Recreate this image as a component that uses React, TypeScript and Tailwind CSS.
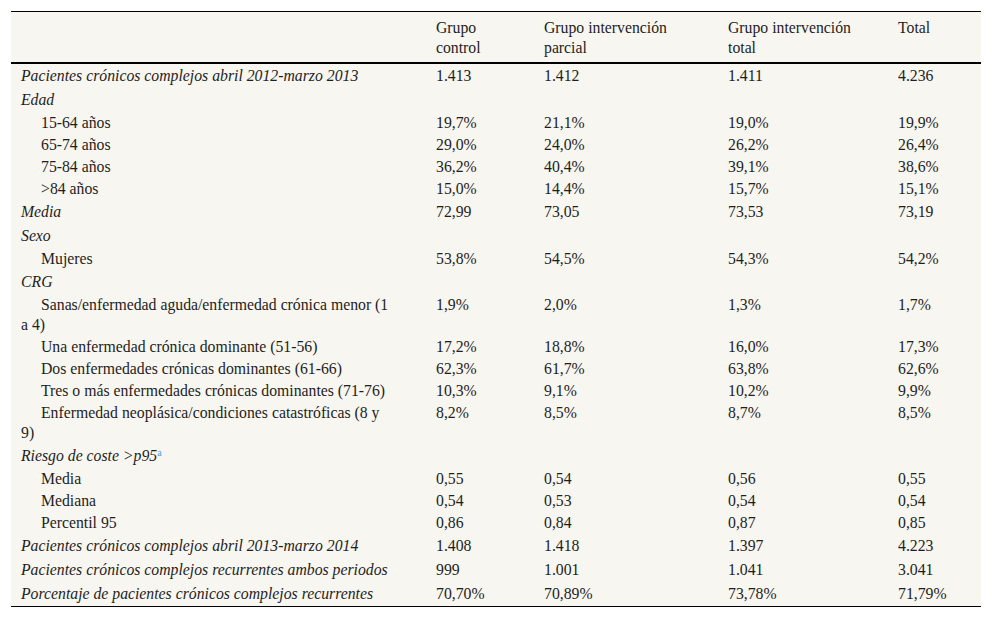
import React from "react";

type Row = { label: React.ReactNode; vals?: string[]; kind: "head" | "sub" };

const rows: Row[] = [
  { label: "Pacientes crónicos complejos abril 2012-marzo 2013", vals: ["1.413", "1.412", "1.411", "4.236"], kind: "head" },
  { label: "Edad", kind: "head" },
  { label: "15-64 años", vals: ["19,7%", "21,1%", "19,0%", "19,9%"], kind: "sub" },
  { label: "65-74 años", vals: ["29,0%", "24,0%", "26,2%", "26,4%"], kind: "sub" },
  { label: "75-84 años", vals: ["36,2%", "40,4%", "39,1%", "38,6%"], kind: "sub" },
  { label: ">84 años", vals: ["15,0%", "14,4%", "15,7%", "15,1%"], kind: "sub" },
  { label: "Media", vals: ["72,99", "73,05", "73,53", "73,19"], kind: "head" },
  { label: "Sexo", kind: "head" },
  { label: "Mujeres", vals: ["53,8%", "54,5%", "54,3%", "54,2%"], kind: "sub" },
  { label: "CRG", kind: "head" },
  { label: "Sanas/enfermedad aguda/enfermedad crónica menor (1 a 4)", vals: ["1,9%", "2,0%", "1,3%", "1,7%"], kind: "sub" },
  { label: "Una enfermedad crónica dominante (51-56)", vals: ["17,2%", "18,8%", "16,0%", "17,3%"], kind: "sub" },
  { label: "Dos enfermedades crónicas dominantes (61-66)", vals: ["62,3%", "61,7%", "63,8%", "62,6%"], kind: "sub" },
  { label: "Tres o más enfermedades crónicas dominantes (71-76)", vals: ["10,3%", "9,1%", "10,2%", "9,9%"], kind: "sub" },
  { label: "Enfermedad neoplásica/condiciones catastróficas (8 y 9)", vals: ["8,2%", "8,5%", "8,7%", "8,5%"], kind: "sub" },
  {
    label: (
      <>
        Riesgo de coste &gt;p95
        <sup className="not-italic text-[10px] text-[#4f9fd6] leading-none">a</sup>
      </>
    ),
    kind: "head",
  },
  { label: "Media", vals: ["0,55", "0,54", "0,56", "0,55"], kind: "sub" },
  { label: "Mediana", vals: ["0,54", "0,53", "0,54", "0,54"], kind: "sub" },
  { label: "Percentil 95", vals: ["0,86", "0,84", "0,87", "0,85"], kind: "sub" },
  { label: "Pacientes crónicos complejos abril 2013-marzo 2014", vals: ["1.408", "1.418", "1.397", "4.223"], kind: "head" },
  { label: "Pacientes crónicos complejos recurrentes ambos periodos", vals: ["999", "1.001", "1.041", "3.041"], kind: "head" },
  { label: "Porcentaje de pacientes crónicos complejos recurrentes", vals: ["70,70%", "70,89%", "73,78%", "71,79%"], kind: "head" },
];

const cellFont =
  "font-['Liberation_Serif','Times_New_Roman',Tinos,'DejaVu_Serif',serif] text-[15.75px] leading-[20px] text-[#1e1e1e]";

export default function App() {
  return (
    <div className="min-h-screen bg-white pt-[11px] pl-[11px] font-serif">
      <table className={`w-[970px] table-fixed border-collapse bg-[#f8f6f0] ${cellFont}`}>
        <colgroup>
          <col className="w-[415px]" />
          <col className="w-[108px]" />
          <col className="w-[184px]" />
          <col className="w-[170px]" />
          <col className="w-[93px]" />
        </colgroup>
        <thead>
          <tr className="border-t border-b-2 border-black">
            <th className={`${cellFont} px-[10px] pt-[6px] pb-[4px]`}></th>
            <th className={`${cellFont} px-[10px] pt-[6px] pb-[4px] text-left align-top font-normal`}>Grupo<br />control</th>
            <th className={`${cellFont} px-[10px] pt-[6px] pb-[4px] text-left align-top font-normal`}>Grupo intervención<br />parcial</th>
            <th className={`${cellFont} px-[10px] pt-[6px] pb-[4px] text-left align-top font-normal`}>Grupo intervención<br />total</th>
            <th className={`${cellFont} px-[10px] pt-[6px] pb-[4px] text-left align-top font-normal`}>Total</th>
          </tr>
        </thead>
        <tbody>
          {rows.map((r, i) => {
            const last = i === rows.length - 1;
            const pad = r.kind === "head" ? "py-[2px]" : "py-px";
            return (
              <tr key={i} className={last ? "border-b border-black" : ""}>
                <td className={`${cellFont} ${pad} pl-[10px] pr-[32px] align-top ${r.kind === "head" ? "italic" : "indent-5"}`}>{r.label}</td>
                {[0, 1, 2, 3].map((j) => (
                  <td key={j} className={`${cellFont} ${pad} px-[10px] align-top`}>{r.vals ? r.vals[j] : ""}</td>
                ))}
              </tr>
            );
          })}
        </tbody>
      </table>
    </div>
  );
}
